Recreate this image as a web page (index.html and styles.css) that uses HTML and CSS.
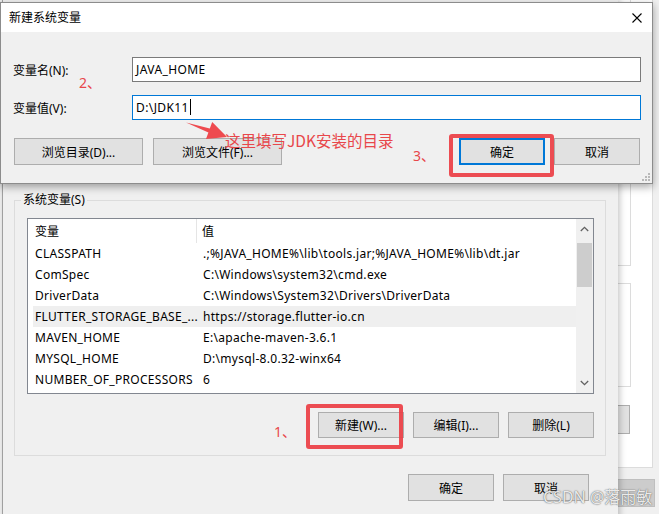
FILE: index.html
```html
<!DOCTYPE html>
<html lang="zh-CN">

<head>
  <meta charset="UTF-8">
  <meta name="viewport" content="width=device-width, initial-scale=1.0">
  <title>新建系统变量</title>
  <link rel="stylesheet" href="styles.css">
</head>

<body>

  <div class="desktop">
    <div class="top-strip"></div>

    <!-- ventana de atras, solo se ve su borde izquierdo -->
    <div class="win-far">
      <div class="far-panel">
        <div class="far-box far-box-1"></div>
        <div class="far-box far-box-2"></div>
        <div class="far-btn"></div>
      </div>
      <div class="far-btn-off"></div>
    </div>

    <!-- ventana de variables de entorno -->
    <div class="win-env">
      <div class="group">
        <span class="group-title">系统变量(S)</span>
        <div class="list">
          <div class="list-main">
            <div class="list-head">
              <div class="head-name">变量</div>
              <div class="head-val">值</div>
            </div>
            <div class="row"><span class="cell-name">CLASSPATH</span><span class="cell-val">.;%JAVA_HOME%\lib\tools.jar;%JAVA_HOME%\lib\dt.jar</span></div>
            <div class="row"><span class="cell-name">ComSpec</span><span class="cell-val">C:\Windows\system32\cmd.exe</span></div>
            <div class="row"><span class="cell-name">DriverData</span><span class="cell-val">C:\Windows\System32\Drivers\DriverData</span></div>
            <div class="row row-sel"><span class="cell-name">FLUTTER_STORAGE_BASE_...</span><span class="cell-val">https://storage.flutter-io.cn</span></div>
            <div class="row"><span class="cell-name">MAVEN_HOME</span><span class="cell-val">E:\apache-maven-3.6.1</span></div>
            <div class="row"><span class="cell-name">MYSQL_HOME</span><span class="cell-val">D:\mysql-8.0.32-winx64</span></div>
            <div class="row"><span class="cell-name">NUMBER_OF_PROCESSORS</span><span class="cell-val">6</span></div>
          </div>
          <div class="scrollbar">
            <div class="sb-btn">
              <svg width="9" height="6" viewBox="0 0 9 6"><polyline points="0.8,5 4.5,1.3 8.2,5" fill="none" stroke="#606060" stroke-width="1.3"/></svg>
            </div>
            <div class="sb-track"><div class="sb-thumb"></div></div>
            <div class="sb-btn">
              <svg width="9" height="6" viewBox="0 0 9 6"><polyline points="0.8,1 4.5,4.7 8.2,1" fill="none" stroke="#606060" stroke-width="1.3"/></svg>
            </div>
          </div>
        </div>
        <div class="group-actions">
          <button class="btn">新建(W)...</button>
          <button class="btn">编辑(I)...</button>
          <button class="btn">删除(L)</button>
        </div>
      </div>
      <div class="env-actions">
        <button class="btn">确定</button>
        <button class="btn">取消</button>
      </div>
    </div>

    <!-- dialogo nuevo -->
    <div class="dialog">
      <div class="title-bar">
        <span class="title">新建系统变量</span>
        <svg class="close" width="10" height="10" viewBox="0 0 10 10">
          <path d="M0.5 0.5 L9.5 9.5 M9.5 0.5 L0.5 9.5" stroke="#000" stroke-width="1.1"/>
        </svg>
      </div>
      <div class="dialog-body">
        <div class="field">
          <label>变量名(N):</label>
          <div class="input">JAVA_HOME</div>
        </div>
        <div class="field">
          <label>变量值(V):</label>
          <div class="input input-focus">D:\JDK11<span class="caret"></span></div>
        </div>
        <div class="dialog-actions">
          <button class="btn btn-wide">浏览目录(D)...</button>
          <button class="btn btn-wide">浏览文件(F)...</button>
          <span class="spacer"></span>
          <button class="btn btn-default">确定</button>
          <button class="btn">取消</button>
        </div>
      </div>
      <svg class="grip" width="8" height="8" viewBox="0 0 8 8" fill="#b8b8b8">
        <rect x="6" y="0" width="2" height="2"/>
        <rect x="3" y="3" width="2" height="2"/>
        <rect x="6" y="3" width="2" height="2"/>
        <rect x="0" y="6" width="2" height="2"/>
        <rect x="3" y="6" width="2" height="2"/>
        <rect x="6" y="6" width="2" height="2"/>
      </svg>
    </div>

    <!-- marcas rojas -->
    <div class="mark mark-new"></div>
    <div class="mark mark-ok"></div>
    <span class="note note-1">1、</span>
    <span class="note note-2">2、</span>
    <span class="note note-3">3、</span>
    <svg class="arrow" width="52" height="28" viewBox="0 0 52 28">
      <polygon points="6,4.5 29.8,10.6 32.2,4 47,19 26,21 28.4,14.4" fill="#ee4a4f"/>
    </svg>
    <span class="note-text">这里填写JDK安装的目录</span>
    <span class="watermark">CSDN @落雨敏</span>
  </div>

</body>

</html>
```

FILE: styles.css
```css
* {
  box-sizing: border-box;
}

body {
  margin: 0;
  background-color: #f0f0f0;
}

.desktop {
  position: relative;
  width: 659px;
  height: 514px;
  overflow: hidden;
  background: #f0f0f0;
  font-family: "Noto Sans", "Noto Sans CJK SC", sans-serif;
  font-size: 12px;
  color: #000;
}

.top-strip {
  position: absolute;
  top: 0;
  left: 160px;
  width: 410px;
  height: 2px;
  background: repeating-linear-gradient(90deg, #555 0 3px, #ddd 3px 5px, #888 5px 7px, #fff 7px 9px);
}

/* ventana de atras */
.win-far {
  position: absolute;
  left: 560px;
  top: 0;
  width: 110px;
  height: 514px;
  background: #f0f0f0;
  border-left: 1px solid #bbb;
}

.far-panel {
  margin-left: 39px;
  width: 53px;
  height: 468px;
  background: #fff;
  border-right: 1px solid #dcdcdc;
  border-bottom: 1px solid #dcdcdc;
}

.far-box {
  width: 31px;
  border: 1px solid #dcdcdc;
  border-left: none;
}

.far-box-1 {
  height: 266px;
  border-top: none;
}

.far-box-2 {
  margin-top: 17px;
  height: 104px;
}

.far-btn {
  margin-top: 18px;
  width: 30px;
  height: 29px;
  background: #e1e1e1;
  border: 1px solid #adadad;
  border-left: none;
}

.far-btn-off {
  margin-top: 11px;
  margin-left: 39px;
  width: 55px;
  height: 28px;
  background: #cccccc;
  border: 1px solid #bfbfbf;
}

/* ventana de variables */
.win-env {
  position: absolute;
  left: 2px;
  top: 0;
  width: 616px;
  height: 540px;
  background: #f0f0f0;
  border-left: 1px solid #a0a0a0;
  box-shadow: 2px 0 6px rgba(0, 0, 0, 0.22);
}

.group {
  position: relative;
  margin: 200px 12px 0 11px;
  padding: 17px 11px 17px 12px;
  border: 1px solid #dcdcdc;
}

.group-title {
  position: absolute;
  top: -9px;
  left: 6px;
  padding: 0 2px;
  line-height: 16px;
  background: #f0f0f0;
}

.list {
  display: flex;
  height: 176px;
  background: #fff;
  border: 1px solid #828790;
}

.list-main {
  flex: 1;
  overflow: hidden;
}

.list-head {
  display: flex;
  height: 24px;
  line-height: 25px;
}

.head-name {
  width: 169px;
  padding-left: 7px;
  border-right: 1px solid #e5e5e5;
}

.head-val {
  padding-left: 5px;
}

.row {
  display: flex;
  height: 21px;
  line-height: 22px;
  margin-left: 5px;
  white-space: nowrap;
  letter-spacing: 0.3px;
}

.row-sel {
  background: #efefef;
}

.cell-name {
  flex: none;
  width: 170px;
  padding-left: 2px;
  overflow: hidden;
}

.cell-val {
  overflow: hidden;
}

.scrollbar {
  display: flex;
  flex-direction: column;
  width: 17px;
  background: #f0f0f0;
}

.sb-btn {
  display: flex;
  justify-content: center;
  align-items: center;
  height: 20px;
}

.sb-track {
  flex: 1;
}

.sb-thumb {
  margin: 4px 1px 0 1px;
  height: 44px;
  background: #cdcdcd;
}

.group-actions,
.env-actions {
  display: flex;
  justify-content: flex-end;
  gap: 9px;
}

.group-actions {
  margin-top: 18px;
}

.env-actions {
  margin-top: 18px;
  padding-right: 29px;
}

.btn {
  width: 86px;
  height: 27px;
  padding: 0;
  font: inherit;
  color: #000;
  background: #e1e1e1;
  border: 1px solid #adadad;
  border-radius: 0;
}

.group-actions .btn {
  height: 26px;
}

/* dialogo */
.dialog {
  position: absolute;
  left: 0;
  top: 2px;
  width: 653px;
  height: 182px;
  background: #f0f0f0;
  border: 1px solid #8c8c8c;
  box-shadow: 0 3px 8px rgba(0, 0, 0, 0.35);
}

.title-bar {
  display: flex;
  align-items: center;
  height: 29px;
  padding-left: 8px;
  background: #fff;
}

.title {
  margin-top: -1px;
}

.close {
  margin-left: auto;
  margin-right: 10px;
}

.dialog-body {
  padding: 25px 11px 0 12px;
}

.field {
  display: flex;
  align-items: center;
  height: 25px;
}

.field + .field {
  margin-top: 13px;
}

.field label {
  width: 119px;
}

.input {
  flex: 1;
  height: 25px;
  line-height: 23px;
  padding-left: 3px;
  background: #fff;
  border: 1px solid #7a7a7a;
  letter-spacing: 0.4px;
}

.input-focus {
  border-color: #0078d7;
}

.caret {
  display: inline-block;
  width: 1px;
  height: 16px;
  margin-left: 1px;
  vertical-align: -3px;
  background: #000;
}

.dialog-actions {
  display: flex;
  gap: 10px;
  margin-top: 18px;
  padding: 0 1px;
}

.btn-wide {
  width: 129px;
}

.spacer {
  flex: 1;
}

.btn-default {
  margin-right: -1px;
  border: 2px solid #0078d7;
}

.grip {
  position: absolute;
  right: 2px;
  bottom: 2px;
}

/* marcas rojas */
.mark {
  position: absolute;
  border: 4px solid rgba(236, 62, 68, 0.92);
  border-radius: 3px;
}

.mark-new {
  left: 306px;
  top: 404px;
  width: 97px;
  height: 45px;
}

.mark-ok {
  left: 449px;
  top: 134px;
  width: 105px;
  height: 43px;
}

.note {
  position: absolute;
  font-size: 14px;
  line-height: 16px;
  color: #e8474b;
}

.note-1 {
  left: 274px;
  top: 424px;
}

.note-2 {
  left: 79px;
  top: 75px;
}

.note-3 {
  left: 413px;
  top: 148px;
}

.arrow {
  position: absolute;
  left: 180px;
  top: 118px;
}

.note-text {
  position: absolute;
  left: 225px;
  top: 131px;
  font-family: "Noto Sans CJK SC", sans-serif;
  font-size: 15.5px;
  line-height: 18px;
  color: #e8474b;
}

.watermark {
  position: absolute;
  left: 543px;
  top: 486px;
  font-size: 16px;
  line-height: 22px;
  color: rgba(248, 248, 248, 0.92);
  text-shadow: 0 0 1px #555, 0 0 2px #999;
}
```
